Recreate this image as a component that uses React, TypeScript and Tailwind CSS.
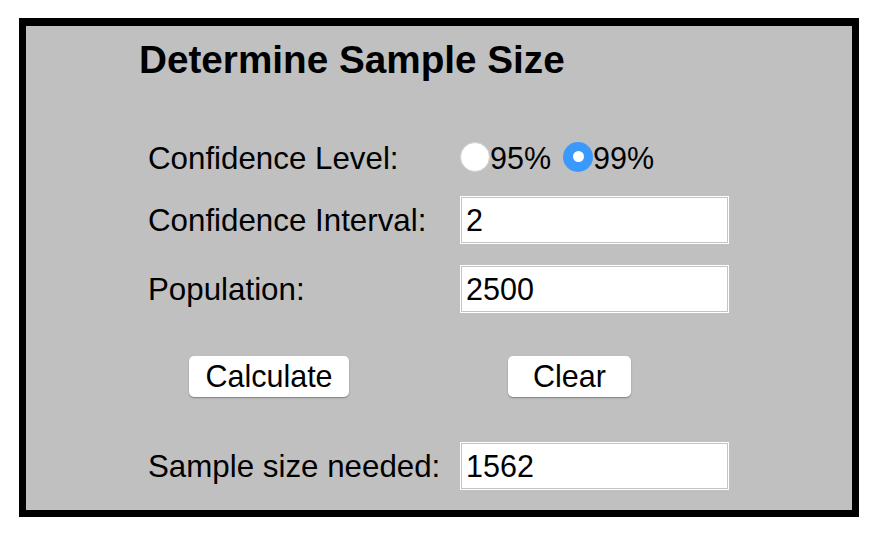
import React from "react";

const font = { fontFamily: '"Liberation Sans", Arial, sans-serif' };

function Field({ value }: { value: string }) {
  return (
    <div className="w-[269px] h-[48px] border border-white shadow-[inset_0_0_0_1px_#c4c4c4] bg-white p-[1px]">
      <div className="h-full w-full bg-white flex items-center pl-[4px] text-[30.5px] leading-[35px] text-black">
        {value}
      </div>
    </div>
  );
}

export default function App() {
  return (
    <div className="w-[879px] h-[538px] bg-white pt-[18px] pl-[19px]" style={font}>
      <div className="w-[840px] h-[499px] border-[7px] border-t-[8px] border-black bg-[#c0c0c0] flex flex-col">
        <div className="pt-[12px] pl-[113px] h-[56px] text-[38.7px] leading-[44px] font-bold text-black">
          Determine Sample Size
        </div>

        <div className="mt-[52px] h-[48px] pl-[122px] flex items-center text-[30.5px] leading-[35px] text-black">
          <div className="w-[312px] text-[31.3px]">Confidence Level:</div>
          <div className="flex items-center">
            <span className="w-[30px] h-[30px] rounded-full bg-white border border-[#d0d0d0] -mt-[3px]" />
            <span>95%</span>
            <span className="ml-[12px] w-[30px] h-[30px] rounded-full bg-[#3b99fc] flex items-center justify-center -mt-[3px]">
              <span className="w-[11px] h-[11px] rounded-full bg-white" />
            </span>
            <span>99%</span>
          </div>
        </div>

        <div className="mt-[14px] h-[48px] pl-[122px] flex items-center text-[30.5px] leading-[35px] text-black">
          <div className="w-[312px] text-[31.3px]">Confidence Interval:</div>
          <Field value="2" />
        </div>

        <div className="mt-[21px] h-[48px] pl-[122px] flex items-center text-[30.5px] leading-[35px] text-black">
          <div className="w-[312px] text-[31.3px]">Population:</div>
          <Field value="2500" />
        </div>

        <div className="mt-[43px] h-[41px] pl-[163px] flex items-center text-[30.5px] leading-[35px] text-black">
          <button className="w-[160px] h-[41px] rounded-[5px] bg-white shadow-[0_1px_1.5px_rgba(0,0,0,0.35)] flex items-center justify-center">
            Calculate
          </button>
          <button className="ml-[159px] w-[123px] h-[41px] rounded-[5px] bg-white shadow-[0_1px_1.5px_rgba(0,0,0,0.35)] flex items-center justify-center">
            Clear
          </button>
        </div>

        <div className="mt-[45px] h-[48px] pl-[122px] flex items-center text-[30.5px] leading-[35px] text-black">
          <div className="w-[312px] text-[31.3px]">Sample size needed:</div>
          <Field value="1562" />
        </div>
      </div>
    </div>
  );
}
